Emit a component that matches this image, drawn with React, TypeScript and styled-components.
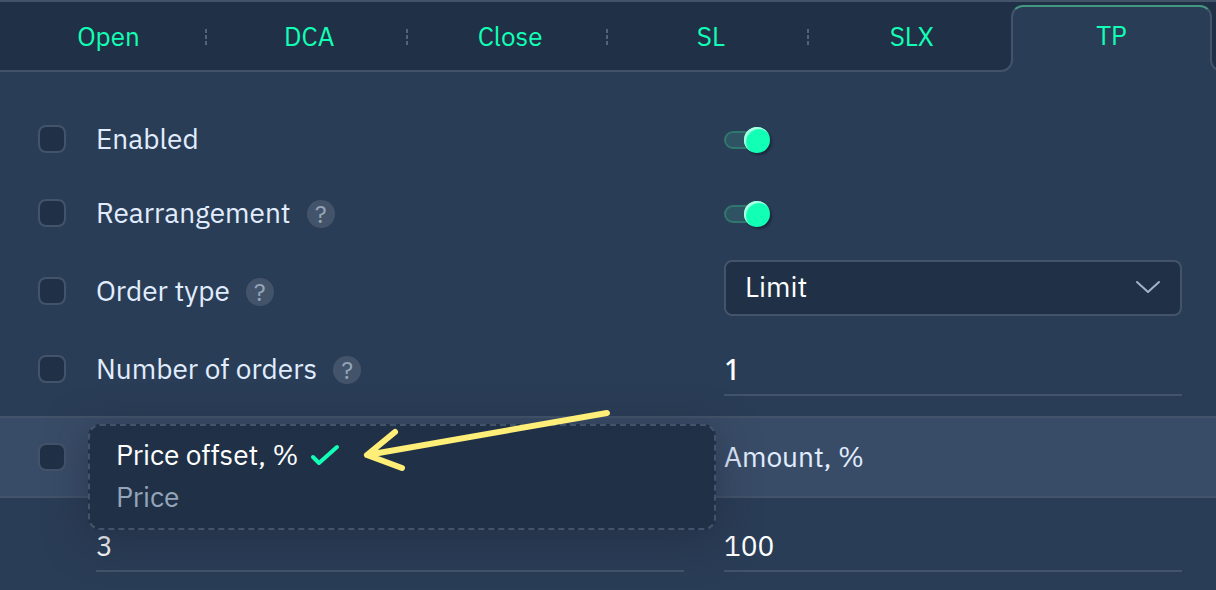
import React, { useState } from "react";
import styled, { createGlobalStyle, css } from "styled-components";

const color = {
  panel: "#2a3d56",
  dark: "#203147",
  line: "#43546a",
  band: "#394c67",
  green: "#12ffb6",
  label: "#e1edff",
  muted: "#94a5ba",
  arrow: "#ffee77",
};

const GlobalStyle = createGlobalStyle`
  *, *::before, *::after { box-sizing: border-box; }
  body {
    margin: 0;
    background: ${color.panel};
    color: ${color.label};
    font-family: "IBM Plex Sans", Roboto, "Noto Sans", sans-serif;
    font-size: 28px;
    line-height: 36px;
    overflow-x: hidden;
  }
  button, input, select { font: inherit; color: inherit; margin: 0; }
`;

const Page = styled.main`
  min-height: 100vh;
  overflow: hidden;
`;

const TabBar = styled.nav`
  display: grid;
  grid-template-columns: repeat(6, 1fr);
  height: 72px;
  padding: 0 4px 0 7px;
  background: ${color.dark};
  border-top: 2px solid ${color.line};
  border-bottom: 2px solid ${color.line};
`;

const Tab = styled.button<{ $active: boolean }>`
  position: relative;
  padding: 0 0 0 2px;
  border: 0;
  background: none;
  color: ${color.green};
  font-size: 26px;
  cursor: pointer;

  ${(p) =>
    p.$active &&
    css`
      margin: 3px 0 -2px;
      padding: 0 0 10px;
      background: ${color.panel};
      border: 2px solid ${color.line};
      border-top-color: #449880;
      border-bottom: 0;
      border-radius: 12px 12px 0 0;
    `}
`;

const TabDivider = styled.span`
  position: absolute;
  right: 1px;
  top: 27px;
  width: 2px;
  height: 16px;
  background: repeating-linear-gradient(
    #53647a 0 4px,
    transparent 4px 6px
  );
`;

const Flare = styled.svg<{ $side: "left" | "right" }>`
  position: absolute;
  bottom: 0;
  ${(p) => p.$side}: -12px;
  ${(p) => p.$side === "right" && "transform: scaleX(-1);"}
`;

const Form = styled.form`
  padding-top: 30px;
`;

const Row = styled.div<{ $tall?: boolean }>`
  display: grid;
  grid-template-columns: 58px 628fr 458fr;
  align-items: center;
  min-height: ${(p) => (p.$tall ? 82 : 74)}px;
  padding: 0 34px 0 38px;
`;

const HeaderRow = styled(Row)`
  margin-top: 10px;
  background: ${color.band};
  border-top: 2px solid ${color.line};
  border-bottom: 2px solid ${color.line};
`;

const ValueRow = styled(Row)`
  align-items: end;
`;

const CheckBox = styled.input`
  appearance: none;
  width: 28px;
  height: 28px;
  border: 2px solid ${color.line};
  border-radius: 8px;
  background: ${color.dark};

  &:checked {
    background: ${color.green};
  }
`;

const LabelCell = styled.div`
  display: flex;
  align-items: center;
  gap: 16px;
`;

const Help = styled.button`
  width: 28px;
  height: 28px;
  margin-top: 2px;
  padding: 0;
  border: 0;
  border-radius: 50%;
  background: ${color.line};
  color: ${color.muted};
  font-size: 24px;
  line-height: 28px;
`;

const Toggle = styled.input`
  appearance: none;
  display: grid;
  align-items: center;
  width: 46px;
  height: 26px;
  margin-top: 2px;

  &::before,
  &::after {
    content: "";
    grid-area: 1 / 1;
  }
  &::before {
    height: 18px;
    border: 2px solid #30776f;
    border-radius: 9px;
    background: #2e5362;
  }
  &::after {
    width: 26px;
    height: 26px;
    border-radius: 50%;
    background: ${color.green};
    box-shadow:
      inset 2px 2px 1px #b4ffe6,
      2px 2px 2px #1b2a3e;
  }
  &:checked::after {
    justify-self: end;
  }
`;

const SelectBox = styled.div`
  position: relative;
  align-self: start;
  padding-top: 10px;
`;

const Select = styled.select`
  appearance: none;
  display: block;
  width: 100%;
  height: 56px;
  padding: 0 60px 2px 19px;
  border: 2px solid ${color.line};
  border-radius: 8px;
  background: ${color.dark};
  color: #fff;
`;

const Chevron = styled.svg`
  position: absolute;
  right: 21px;
  top: 30px;
  pointer-events: none;
`;

const Field = styled.input<{ $count?: boolean }>`
  display: block;
  width: 100%;
  height: 52px;
  padding: 0;
  border: 0;
  border-bottom: 2px solid ${color.line};
  background: none;
  color: #fff;
  outline: 0;
  ${(p) => p.$count && 'font-family: "Noto Sans", sans-serif; font-weight: 500;'}
`;

const FieldCell = styled.div<{ $gutter?: boolean }>`
  align-self: end;
  padding: 0 ${(p) => (p.$gutter ? 40 : 0)}px 10px 0;
`;

const ValueSpace = styled.div`
  padding-top: 10px;
`;

const MenuCell = styled.div`
  position: relative;
  align-self: stretch;
`;

const Menu = styled.div`
  position: absolute;
  z-index: 1;
  top: 6px;
  left: -8px;
  right: 8px;
  padding: 8px 26px 10px;
  border: 2px dashed ${color.line};
  border-radius: 12px;
  background: ${color.dark};
  box-shadow: 0 8px 40px rgba(32, 36, 58, 0.5);
`;

const Option = styled.button<{ $chosen: boolean }>`
  display: flex;
  align-items: center;
  gap: 11px;
  width: 100%;
  height: 42px;
  padding: 0;
  border: 0;
  background: none;
  color: ${(p) => (p.$chosen ? "#fff" : color.muted)};
`;

const Arrow = styled.svg`
  position: absolute;
  left: 270px;
  top: -20px;
  pointer-events: none;
`;

const tabs = ["Open", "DCA", "Close", "SL", "SLX", "TP"];
const priceModes = ["Price offset, %", "Price"];

function TabFlare({ side }: { side: "left" | "right" }) {
  return (
    <Flare $side={side} width="12" height="12" viewBox="0 0 12 12" aria-hidden="true">
      <path d="M0 11A11 11 0 0 0 11 0H12V12H0Z" fill={color.panel} />
      <path d="M0 11A11 11 0 0 0 11 0" fill="none" stroke={color.line} strokeWidth="2" />
    </Flare>
  );
}

function SettingLabel({ id, text, help }: { id: string; text: string; help?: boolean }) {
  return (
    <LabelCell>
      <label htmlFor={id}>{text}</label>
      {help && (
        <Help type="button" aria-label={`About ${text}`}>
          ?
        </Help>
      )}
    </LabelCell>
  );
}

export default function App() {
  const [tab, setTab] = useState("TP");
  const [mode, setMode] = useState(priceModes[0]);

  return (
    <Page>
      <GlobalStyle />
      <TabBar>
        {tabs.map((name, i) => (
          <Tab key={name} type="button" $active={name === tab} onClick={() => setTab(name)}>
            {name}
            {name === tab ? (
              <>
                <TabFlare side="left" />
                <TabFlare side="right" />
              </>
            ) : (
              tabs[i + 1] && tabs[i + 1] !== tab && <TabDivider />
            )}
          </Tab>
        ))}
      </TabBar>
      <Form>
        <Row>
          <CheckBox type="checkbox" aria-label="Apply Enabled" />
          <SettingLabel id="enabled" text="Enabled" />
          <Toggle id="enabled" type="checkbox" defaultChecked />
        </Row>
        <Row>
          <CheckBox type="checkbox" aria-label="Apply Rearrangement" />
          <SettingLabel id="rearrangement" text="Rearrangement" help />
          <Toggle id="rearrangement" type="checkbox" defaultChecked />
        </Row>
        <Row $tall>
          <CheckBox type="checkbox" aria-label="Apply Order type" />
          <SettingLabel id="order-type" text="Order type" help />
          <SelectBox>
            <Select id="order-type" defaultValue="Limit">
              <option>Limit</option>
            </Select>
            <Chevron width="26" height="16" viewBox="0 0 26 16" aria-hidden="true">
              <path d="M2 2L13 12L24 2" fill="none" stroke="#a6b3c6" strokeWidth="2" strokeLinecap="round" strokeLinejoin="round" />
            </Chevron>
          </SelectBox>
        </Row>
        <Row>
          <CheckBox type="checkbox" aria-label="Apply Number of orders" />
          <SettingLabel id="orders" text="Number of orders" help />
          <FieldCell>
            <Field id="orders" defaultValue="1" $count />
          </FieldCell>
        </Row>
        <HeaderRow $tall>
          <CheckBox type="checkbox" aria-label="Apply price grid" />
          <MenuCell>
            <Menu role="menu">
              {priceModes.map((name) => (
                <Option
                  key={name}
                  type="button"
                  role="menuitemradio"
                  aria-checked={name === mode}
                  $chosen={name === mode}
                  onClick={() => setMode(name)}
                >
                  {name}
                  {name === mode && (
                    <svg width="30" height="22" viewBox="0 0 30 22" aria-hidden="true">
                      <path d="M3 13L9 19L27 3" fill="none" stroke={color.green} strokeWidth="4" strokeLinecap="round" strokeLinejoin="round" />
                    </svg>
                  )}
                </Option>
              ))}
              <Arrow width="256" height="70" viewBox="0 0 256 70" aria-hidden="true">
                <path d="M247 7L7 49M35 26L7 49L42 62" fill="none" stroke={color.arrow} strokeWidth="6" strokeLinecap="round" strokeLinejoin="round" />
              </Arrow>
            </Menu>
          </MenuCell>
          <label htmlFor="amount">Amount, %</label>
        </HeaderRow>
        <ValueSpace>
          <ValueRow>
            <span />
            <FieldCell $gutter>
              <Field aria-label={mode} defaultValue="3" />
            </FieldCell>
            <FieldCell>
              <Field id="amount" defaultValue="100" />
            </FieldCell>
          </ValueRow>
        </ValueSpace>
      </Form>
    </Page>
  );
}
